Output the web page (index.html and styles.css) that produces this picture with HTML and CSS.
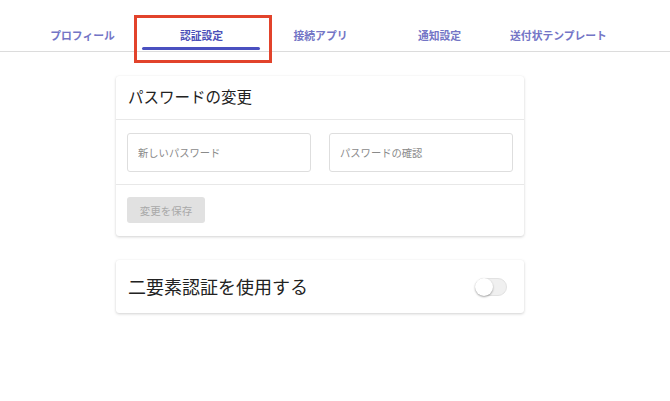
FILE: index.html
```html
<!DOCTYPE html>
<html lang="ja">
<head>
    <meta charset="UTF-8">
    <title>アカウント設定</title>
    <link rel="stylesheet" href="styles.css">
</head>
<body>
<nav class="tabs">
    <a class="tab">プロフィール</a>
    <a class="tab active">認証設定<span class="mark"></span></a>
    <a class="tab">接続アプリ</a>
    <a class="tab">通知設定</a>
    <a class="tab">送付状テンプレート</a>
</nav>
<main class="content">
    <section class="card">
        <h2 class="card-title">パスワードの変更</h2>
        <div class="card-body fields">
            <input type="password" class="field" placeholder="新しいパスワード">
            <input type="password" class="field" placeholder="パスワードの確認">
        </div>
        <div class="card-actions">
            <button class="btn" disabled>変更を保存</button>
        </div>
    </section>
    <section class="card row">
        <h2 class="row-title">二要素認証を使用する</h2>
        <label class="switch">
            <input type="checkbox">
            <span class="track"><span class="thumb"></span></span>
        </label>
    </section>
</main>
</body>
</html>
```

FILE: styles.css
```css
body {
    margin: 0; background: #fff; color: #222;
    font-family: "Noto Sans", "Noto Sans CJK JP", sans-serif;
}
.tabs {
    display: flex; height: 51px; padding-left: 23px;
    border-bottom: 1px solid #dcdcdc;
}
.tab {
    position: relative;
    width: 119px; padding-top: 27px; box-sizing: border-box;
    text-align: center; font-size: 10.8px; font-weight: bold;
    color: #7375c6; cursor: pointer;
}
.tab.active { color: #4b4fb8; }
.tab.active::after {
    content: ""; position: absolute; left: 0; right: 1px; bottom: 1px;
    height: 3px; border-radius: 2px; background: #4a50c0;
}
/* red call-out frame around the current tab */
.mark {
    position: absolute; left: -8px; right: -11px; top: 15px; bottom: -12px;
    border: 3.5px solid #e2432b; pointer-events: none;
}
.content { width: 408px; margin: 24px 0 0 116px; }
.card {
    background: #fff; border-radius: 3px;
    box-shadow: 0 1px 3px rgba(0,0,0,0.18), 0 0 1px rgba(0,0,0,0.06);
    margin-bottom: 24px;
}
.card-title {
    margin: 0; padding: 9px 12px 0; height: 34px;
    font-size: 15.5px; font-weight: normal; color: #222;
    border-bottom: 1px solid #e8e8e8;
}
.fields {
    display: flex; gap: 18px; padding: 13px 11px 12px;
    border-bottom: 1px solid #e8e8e8;
}
.field {
    flex: 1; min-width: 0; height: 39px; box-sizing: border-box;
    border: 1px solid #dedede; border-radius: 3px; padding: 0 10px;
    font: inherit; font-size: 10.3px;
}
.field::placeholder { color: #8a8a8a; }
.card-actions { padding: 12px 11px 13px; }
.btn {
    width: 78px; height: 26px; border: none; border-radius: 3px;
    background: #e1e1e1; color: #a9a9a9; font: inherit; font-size: 10.5px;
}
.row {
    display: flex; align-items: center; justify-content: space-between;
    height: 53px; padding: 0 17px 0 12px;
}
.row-title { margin: 0 0 2px; font-size: 18px; font-weight: normal; color: #222; }
.switch input { display: none; }
.track {
    display: block; position: relative; width: 32px; height: 18px;
    border-radius: 9px; background: #f0f0f0; border: 1px solid #e2e2e2;
    box-sizing: border-box;
}
.thumb {
    position: absolute; left: -1px; top: -1px; width: 18px; height: 18px;
    border-radius: 50%; background: #fff;
    box-shadow: 0 1px 2px rgba(0,0,0,0.35);
}
```
